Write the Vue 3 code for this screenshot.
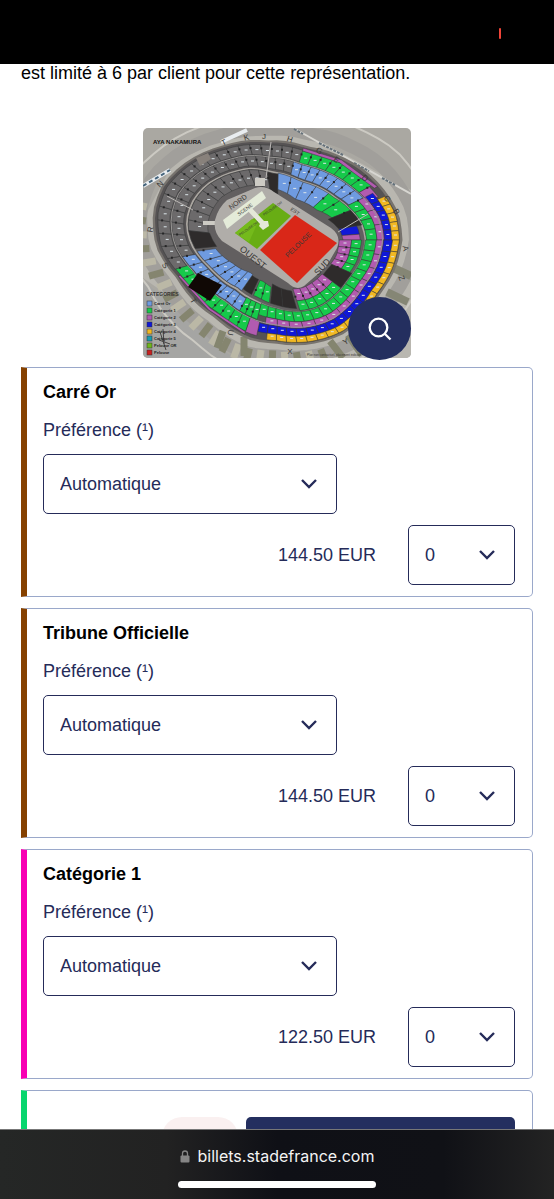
<script setup>
import { ref } from 'vue'

const categories = ref([
  { id: 'carre-or', name: 'Carré Or', price: '144.50 EUR', color: '#854100', preference: 'Automatique', quantity: 0 },
  { id: 'tribune', name: 'Tribune Officielle', price: '144.50 EUR', color: '#854100', preference: 'Automatique', quantity: 0 },
  { id: 'categorie-1', name: 'Catégorie 1', price: '122.50 EUR', color: '#f800b4', preference: 'Automatique', quantity: 0 }
])
const quantities = [0, 1, 2, 3, 4, 5, 6]

const BLUE = '#6f9be0'
const GREEN = '#16c94a'
const PINK = '#b25bb0'
const NAVY = '#1018d8'
const YELLOW = '#f2b822'
const GREY = '#6c6a6b'
const DARK = '#2e2b2b'

const legend = [
  { label: 'Carré Or', color: BLUE },
  { label: 'Catégorie 1', color: GREEN },
  { label: 'Catégorie 2', color: PINK },
  { label: 'Catégorie 3', color: NAVY },
  { label: 'Catégorie 4', color: YELLOW },
  { label: 'Catégorie 5', color: '#169bb0' },
  { label: 'Pelouse OR', color: '#6fb51c' },
  { label: 'Pelouse', color: '#c92020' }
]

// bowl outlines as [angle, radius] around the centre, clockwise from the right
const centre = [134, 112]
const outer = [
  [0, 123], [15, 119], [28, 114], [54, 113], [73, 107], [91, 101], [104, 101], [129, 97], [159, 105],
  [177, 119], [193, 125], [206, 125], [220, 118], [240, 107], [264, 98], [288, 96], [308, 103],
  [331, 114], [348, 122], [360, 123]
]
const inner = [
  [0, 61], [15, 60], [30, 56], [62, 53], [73, 50], [107, 36], [130, 36], [152, 44], [187, 65],
  [198, 67], [217, 66], [249, 55], [267, 44], [295, 36], [323, 40], [352, 59], [360, 61]
]

function radius(list, angle) {
  const a = ((angle % 360) + 360) % 360
  const i = list.findIndex(p => p[0] > a)
  const [a0, r0] = list[i - 1]
  const [a1, r1] = list[i]
  return r0 + ((r1 - r0) * (a - a0)) / (a1 - a0)
}

function point(angle, t) {
  const ri = radius(inner, angle)
  const r = ri + (radius(outer, angle) - ri) * t
  const rad = (angle * Math.PI) / 180
  return [
    (centre[0] + r * Math.cos(rad)).toFixed(1),
    (centre[1] + r * Math.sin(rad)).toFixed(1)
  ]
}

function outline(t) {
  const pts = []
  for (let a = 0; a < 360; a += 5) pts.push(point(a, t).join(','))
  return pts.join(' ')
}

// [from angle, to angle, from depth, to depth, number of blocks, colour]
const bands = [
  [186, 262, 0.08, 0.42, 11, GREY],
  [262, 271, 0.06, 0.42, 1, DARK],
  [271, 318, 0.14, 0.44, 4, BLUE],
  [318, 338, 0.14, 0.44, 2, GREEN],
  [338, 350, 0.08, 0.44, 1, DARK],
  [350, 356, 0.08, 0.36, 1, NAVY],
  [356, 360, 0.08, 0.36, 1, PINK],
  [0, 24, 0.02, 0.22, 4, PINK],
  [0, 24, 0.22, 0.38, 4, GREEN],
  [24, 37, 0.04, 0.42, 1, DARK],
  [37, 72, 0.02, 0.24, 5, PINK],
  [37, 72, 0.24, 0.42, 5, GREEN],
  [74, 96, 0.06, 0.38, 2, DARK],
  [97, 113, 0.12, 0.38, 2, GREEN],
  [115, 125, 0.12, 0.38, 1, DARK],
  [125, 172, 0.1, 0.42, 6, BLUE],
  [174, 186, 0.06, 0.42, 1, DARK],

  [170, 282, 0.5, 0.71, 17, GREY],
  [282, 334, 0.48, 0.71, 8, BLUE],
  [334, 360, 0.46, 0.63, 4, GREEN],
  [0, 104, 0.44, 0.62, 16, GREEN],
  [334, 360, 0.63, 0.75, 3, PINK],
  [0, 98, 0.62, 0.74, 12, PINK],
  [104, 118, 0.46, 0.7, 3, GREEN],
  [118, 170, 0.48, 0.7, 8, BLUE],

  [164, 286, 0.74, 0.95, 19, GREY],
  [286, 330, 0.73, 0.94, 7, GREEN],
  [286, 332, 0.94, 0.99, 1, PINK],
  [330, 337, 0.73, 0.9, 1, PINK],
  [334, 360, 0.75, 0.87, 5, NAVY],
  [338, 360, 0.87, 0.99, 5, YELLOW],
  [0, 102, 0.74, 0.88, 17, NAVY],
  [0, 96, 0.88, 0.99, 17, YELLOW],
  [102, 109, 0.72, 0.95, 1, PINK],
  [109, 164, 0.72, 0.94, 9, GREEN],
  [109, 160, 0.95, 0.99, 1, PINK]
]

const blocks = bands.flatMap(([a0, a1, t0, t1, count, fill]) => {
  const step = (a1 - a0) / count
  return Array.from({ length: count }, (_, i) => {
    const from = a0 + step * i
    const to = from + step
    const mid = from + step / 2
    const pts = [
      point(from, t0), point(mid, t0), point(to, t0),
      point(to, t1), point(mid, t1), point(from, t1)
    ]
    return {
      points: pts.map(p => p.join(',')).join(' '),
      fill,
      label: count > 1 && fill !== DARK ? point(mid, t0 + (t1 - t0) * 0.45) : null,
      gate: count > 1 && fill !== DARK && t1 - t0 > 0.19 ? point(to, t0 + (t1 - t0) * 0.65) : null
    }
  })
})

// small booths on the ring outside the stands
const booths = Array.from({ length: 22 }, (_, i) => {
  const angle = 68 + i * 6
  const [x, y] = point(angle, 1.28)
  return { x, y, angle, fill: i % 2 ? '#bbb8a6' : '#85856f' }
})

const gates = [
  ['T', 82, 17, -25], ['K', 104, 12, -15], ['J', 121, 11, 0], ['H', 146, 14, 18],
  ['G', 175, 25, 30], ['E', 192, 34, 35], ['D', 220, 52, 45], ['C', 242, 72, 55], ['B', 251, 85, 60],
  ['N', 19, 58, -45], ['R', 10, 102, -80], ['S', 20, 139, 55], ['T', 48, 174, 60], ['U', 85, 204, 100],
  ['X', 147, 226, 0], ['Y', 204, 216, -30], ['A', 260, 121, 80], ['Z', 256, 151, 70]
]
</script>

<template>
  <div class="screen">
    <header class="status-bar">
      <span class="recording"></span>
    </header>

    <main class="content">
      <p class="notice">est limité à 6 par client pour cette représentation.</p>

      <div class="plan">
        <svg class="plan-map" viewBox="0 0 268 230" role="img" aria-label="Plan de la salle">
          <rect width="268" height="230" fill="#aaa8a2" />
          <path d="M0 92 30 35 76 13 152 0 268 62V230H115L0 150Z" fill="#b9b7b0" />
          <path d="M0 152 90 230H0Z" fill="#a5a5a3" />
          <polygon :points="outline(1.55)" fill="none" stroke="#cccac3" stroke-width="2" />
          <polygon :points="outline(1.25)" fill="none" stroke="#a19f9b" stroke-width="13" />
          <rect
            v-for="(booth, i) in booths"
            :key="'booth' + i"
            :x="-7"
            :y="-3"
            width="15"
            height="7"
            :fill="booth.fill"
            :transform="`translate(${booth.x} ${booth.y}) rotate(${booth.angle})`"
          />
          <path d="M0 58 27 42M78 14 104 2" stroke="#e9edf0" stroke-width="4" />
          <path d="M0 58 27 42" stroke="#45647c" stroke-width="2" stroke-dasharray="4 3" />
          <path d="M152 1 268 66" stroke="#d7d6d1" stroke-width="2" />
          <path d="M151 1 160 6M176 15 200 27M211 35 226 43M239 50 252 57" stroke="#65717a" stroke-width="2" stroke-dasharray="3 1" />
          <path d="M236 181 262 195M244 164 265 174M246 138 268 148" stroke="#858675" stroke-width="8" />
          <path d="M80 203 74 220M101 209 101 228M187 213 200 230M205 207 219 227" stroke="#84856f" stroke-width="7" />

          <polygon :points="outline(1.04)" fill="#77736e" />
          <polygon :points="outline(1)" fill="#565354" />
          <polygon :points="outline(0.46)" fill="#aaa6a0" />
          <polygon :points="outline(0.43)" fill="#625f60" />
          <polygon
            v-for="(block, i) in blocks"
            :key="'block' + i"
            :points="block.points"
            :fill="block.fill"
            stroke="#343737"
            stroke-width="0.5"
          />
          <template v-for="(block, i) in blocks" :key="'mark' + i">
            <rect v-if="block.gate" :x="block.gate[0] - 1" :y="block.gate[1] - 1" width="2" height="2" fill="#252526" />
            <rect v-if="block.label" :x="block.label[0] - 1" :y="block.label[1] - 1" width="3" height="1" fill="#dce6ea" />
          </template>
          <polygon :points="outline(0.72)" fill="none" stroke="#989694" />
          <path d="M128 14 123 50M24 68 50 82M195 104 225 86" stroke="#bbb8b5" />
          <path d="M53 30 65 25 68 31 57 38Z" fill="#88817b" />
          <path d="M45 159 55 145 79 157 67 173Z" fill="#100805" />
          <path d="M112 50h10v8h-10ZM60 93h15v4H60Z" fill="#cdcbc4" />

          <path d="M72 92Q75 80 84 72L112 60Q122 57 131 64L188 100Q199 108 194 120L183 139 161 158Q153 163 145 155L117 137 79 113Q70 104 72 92Z" fill="#b0ada9" />
          <path d="M92 105 130 75 148 88 114 121Z" fill="#68ad14" />
          <path d="M109 91 115 94 106 114 92 105Z" fill="#74ba1b" />
          <path d="M80 92 119 63 123 70 84 101Z" fill="#e4ebd9" />
          <path d="M102 80 106 77 121 93 125 93 126 98 120 102 116 98 117 96Z" fill="#e4e8d8" />
          <path d="M152 87 194 115 154 155 117 122Z" fill="#d92718" />

          <g class="plan-text">
            <text x="10" y="15.5" class="artist">AYA NAKAMURA</text>
            <text transform="translate(88 82) rotate(-36)" font-size="7">NORD</text>
            <text transform="translate(96 88) rotate(-36)" font-size="5">SCENE</text>
            <text transform="translate(97 108) rotate(-35)" font-size="3.5">PELOUSE OR</text>
            <text transform="translate(121 88) rotate(-35)" font-size="3.5">PELOUSE OR</text>
            <text transform="translate(145 130) rotate(-44)" font-size="7">PELOUSE</text>
            <text transform="translate(96 122) rotate(39)" font-size="9">OUEST</text>
            <text transform="translate(175 148) rotate(-47)" font-size="9">SUD</text>
            <text transform="translate(147 82) rotate(34)" font-size="5">EST</text>
            <text
              v-for="([name, x, y, turn], i) in gates"
              :key="'gate' + i"
              :transform="`translate(${x} ${y}) rotate(${turn})`"
              font-size="8"
              text-anchor="middle"
            >{{ name }}</text>
            <text x="3" y="168" font-size="5" font-weight="bold">CATEGORIES</text>
            <text x="164" y="228" font-size="3">Plan non contractuel, placement indicatif</text>
          </g>
          <path d="M17 204 23 222M16 212 27 216M20 201 21 216" stroke="#444" />
          <g v-for="(item, i) in legend" :key="item.label">
            <rect x="4" :y="173 + i * 7" width="5" height="5" :fill="item.color" stroke="#333" stroke-width="0.5" />
            <text x="11" :y="177 + i * 7" class="legend-text">{{ item.label }}</text>
          </g>
        </svg>
        <button class="zoom-button" type="button" aria-label="Agrandir le plan">
          <svg viewBox="0 0 24 24" width="24" height="24" fill="none" stroke="#fff" stroke-width="2.3">
            <circle cx="10.5" cy="10.5" r="8.8" />
            <path d="m16.5 16.5 6 6" />
          </svg>
        </button>
      </div>

      <section class="category-list">
        <article
          v-for="category in categories"
          :key="category.id"
          class="category"
          :style="{ borderLeftColor: category.color }"
        >
          <h2>{{ category.name }}</h2>
          <label :for="category.id + '-pref'">Préférence (¹)</label>
          <div class="select-box preference">
            <select :id="category.id + '-pref'" v-model="category.preference">
              <option>Automatique</option>
            </select>
            <svg class="chevron" viewBox="0 0 16 10" width="16" height="10">
              <path d="m1 1 7 7 7-7" />
            </svg>
          </div>
          <div class="price-row">
            <span>{{ category.price }}</span>
            <div class="select-box quantity">
              <select v-model="category.quantity" :aria-label="'Quantité ' + category.name">
                <option v-for="n in quantities" :key="n" :value="n">{{ n }}</option>
              </select>
              <svg class="chevron" viewBox="0 0 16 10" width="16" height="10">
                <path d="m1 1 7 7 7-7" />
              </svg>
            </div>
          </div>
        </article>
        <article class="category next"></article>
      </section>

      <div class="actions">
        <span class="total"></span>
        <button class="submit" type="button" aria-label="Ajouter au panier"></button>
      </div>
    </main>

    <footer class="browser-bar">
      <div class="address">
        <svg viewBox="0 0 10 13" width="10" height="13">
          <path d="M2.5 6V3.5a2.5 2.5 0 0 1 5 0V6" fill="none" stroke="#858585" stroke-width="1.3" />
          <rect x="0.5" y="5.5" width="9" height="7" rx="1" fill="#858585" />
        </svg>
        <span>billets.stadefrance.com</span>
      </div>
      <div class="home-indicator"></div>
    </footer>
  </div>
</template>

<style>
body {
  margin: 0;
  background: #fff;
}
</style>

<style scoped>
.screen {
  display: flex;
  flex-direction: column;
  height: 100vh;
  overflow: hidden;
  color: #252b59;
  font-family: "Liberation Sans", Arial, sans-serif;
  font-size: 18px;
}

.screen * {
  box-sizing: border-box;
}

.status-bar {
  display: flex;
  flex-shrink: 0;
  align-items: center;
  justify-content: flex-end;
  height: 64px;
  padding: 2px 53px 0 0;
  background: #000;
}

.recording {
  width: 2px;
  height: 11px;
  border-radius: 1px;
  background: #f04438;
}

.content {
  position: relative;
  flex: 1;
  min-height: 0;
  padding: 0 21px;
  overflow: hidden;
}

.notice {
  margin: 0;
  color: #000;
  line-height: 18px;
}

.plan {
  position: relative;
  width: 268px;
  margin: 46px auto 9px;
}

.plan-map {
  display: block;
  width: 100%;
  border-radius: 5px;
}

.plan-text {
  fill: #393735;
}

.artist {
  fill: #111;
  font-size: 6px;
  font-weight: bold;
}

.legend-text {
  fill: #222;
  font-size: 4px;
  font-weight: bold;
}

.zoom-button {
  position: absolute;
  right: 0;
  bottom: -2px;
  display: flex;
  align-items: center;
  justify-content: center;
  width: 63px;
  height: 63px;
  padding: 0;
  border: 0;
  border-radius: 50%;
  background: #242f5f;
}

.category-list {
  display: flex;
  flex-direction: column;
  gap: 11px;
}

.category {
  padding: 12px 17px 11px 16px;
  border: 1px solid #9aa8ca;
  border-left: 6px solid;
  border-radius: 0 5px 5px 0;
}

.category.next {
  height: 230px;
  border-left-color: #08d66e;
}

.category h2 {
  margin: 0 0 15px;
  color: #000;
  font-size: 18px;
  line-height: 24px;
}

.category label {
  display: block;
  margin-bottom: 13px;
  line-height: 22px;
}

.select-box {
  position: relative;
}

.select-box select {
  display: block;
  width: 100%;
  height: 60px;
  padding: 0 16px;
  border: 1px solid #252b59;
  border-radius: 5px;
  appearance: none;
  background: #fff;
  color: inherit;
  font: inherit;
}

.chevron {
  position: absolute;
  top: 25px;
  right: 20px;
  fill: none;
  stroke: #252b59;
  stroke-width: 2.4;
  pointer-events: none;
}

.preference {
  width: 294px;
  max-width: 100%;
}

.price-row {
  display: flex;
  align-items: center;
  justify-content: flex-end;
  gap: 32px;
  margin-top: 11px;
}

.quantity {
  width: 107px;
}

.actions {
  position: absolute;
  right: 39px;
  bottom: -48px;
  left: 162px;
  display: flex;
  gap: 8px;
  height: 60px;
}

.total {
  width: 76px;
  border-radius: 20px;
  background: #faf0f0;
}

.submit {
  flex: 1;
  border: 0;
  border-radius: 5px;
  background: #242f5f;
}

.browser-bar {
  display: flex;
  flex-direction: column;
  flex-shrink: 0;
  align-items: center;
  justify-content: space-between;
  height: 70px;
  padding: 15px 0 11px;
  border-top: 1px solid #777;
  background: linear-gradient(90deg, #252726 0%, #222 30%, #0f1016 50%, #101116 80%, #232323 100%);
}

.address {
  display: flex;
  align-items: center;
  gap: 8px;
  color: #f4f4f4;
  font-family: Inter, Roboto, sans-serif;
  font-size: 16px;
  line-height: 22px;
}

.home-indicator {
  width: 198px;
  height: 7px;
  border-radius: 4px;
  background: #fff;
}
</style>
